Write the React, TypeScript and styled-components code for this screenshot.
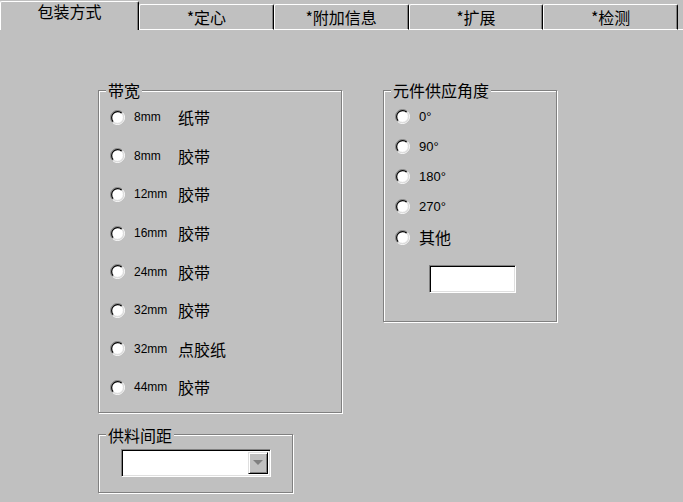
import React from "react";
import styled, { createGlobalStyle } from "styled-components";

const GlobalStyle = createGlobalStyle`
    html, body {
        margin: 0;
        padding: 0;
        background: #c0c0c0;
    }
    body {
        font-family: "Noto Sans CJK SC", "Liberation Sans", sans-serif;
        color: #000;
    }
`;

const CJK = `"Noto Sans CJK SC", "Noto Sans CJK JP", sans-serif`;
const LATIN = `"Liberation Sans", Arial, sans-serif`;

const StyledWindow = styled.div`
    width: 683px;
    height: 502px;
    overflow: hidden;
    background: #c0c0c0;
`;

const StyledTabStrip = styled.div`
    display: flex;
    flex-direction: row;
    align-items: flex-end;
    height: 30px;
`;

const StyledTab = styled.div<{ $active?: boolean }>`
    box-sizing: border-box;
    display: flex;
    align-items: center;
    justify-content: center;
    width: ${(p) => (p.$active ? "139px" : "134.75px")};
    height: ${(p) => (p.$active ? "29px" : "26px")};
    padding-bottom: ${(p) => (p.$active ? "10px" : "0")};
    border-top: 1px solid #fff;
    border-left: 1px solid #fff;
    border-right: 1px solid #000;
    border-bottom: ${(p) => (p.$active ? "none" : "1px solid #fff")};
    box-shadow: inset -1px 0 0 #808080;
    border-top-left-radius: 2px;
    border-top-right-radius: 2px;
    font-family: ${CJK};
    font-size: 16px;
    line-height: 18px;
    user-select: none;
`;

const StyledTabFiller = styled.div`
    flex: 1;
    height: 1px;
    background: #fff;
`;

const StyledPanel = styled.div`
    display: flex;
    flex-direction: row;
    align-items: flex-start;
    gap: 41px;
    padding: 52px 0 0 98px;
`;

const StyledColumn = styled.div`
    display: flex;
    flex-direction: column;
    gap: 14px;
`;

const StyledGroup = styled.fieldset<{ $width: number }>`
    box-sizing: border-box;
    width: ${(p) => p.$width}px;
    margin: 0;
    padding: 0;
    min-width: 0;
    border: 1px solid #808080;
    box-shadow: 1px 1px 0 #fff, inset 1px 1px 0 #fff;
`;

const StyledLegend = styled.legend`
    margin-left: 7px;
    padding: 0 2px;
    background: #c0c0c0;
    font-family: ${CJK};
    font-size: 16px;
    line-height: 16px;
`;

const StyledRadioList = styled.div<{ $top: number; $bottom: number }>`
    display: flex;
    flex-direction: column;
    padding: ${(p) => p.$top}px 0 ${(p) => p.$bottom}px 11px;
`;

const StyledRadioRow = styled.label<{ $h: number }>`
    display: flex;
    flex-direction: row;
    align-items: center;
    gap: 9px;
    height: ${(p) => p.$h}px;
    cursor: default;
`;

const StyledRadioSvg = styled.svg`
    flex-shrink: 0;
    display: block;
`;

const StyledRadioText = styled.div`
    display: flex;
    flex-direction: row;
    align-items: center;
`;

const StyledSize = styled.span`
    width: 44px;
    font-family: ${LATIN};
    font-size: 12px;
`;

const StyledAngle = styled.span`
    font-family: ${LATIN};
    font-size: 13px;
`;

const StyledCjk = styled.span`
    font-family: ${CJK};
    font-size: 16px;
    line-height: 18px;
`;

const StyledField = styled.div<{ $width: number }>`
    box-sizing: border-box;
    width: ${(p) => p.$width}px;
    height: 28px;
    background: #fff;
    border-top: 1px solid #808080;
    border-left: 1px solid #808080;
    border-right: 1px solid #fff;
    border-bottom: 1px solid #fff;
    box-shadow: inset 1px 1px 0 #000, inset -1px -1px 0 #dfdfdf;
`;

const StyledInputWrap = styled.div`
    padding: 13px 0 28px 45px;
`;

const StyledComboWrap = styled.div`
    padding: 6px 0 15px 22px;
`;

const StyledCombo = styled(StyledField)`
    display: flex;
    flex-direction: row;
    justify-content: flex-end;
    padding: 2px;
`;

const StyledDropButton = styled.div`
    box-sizing: border-box;
    display: flex;
    align-items: center;
    justify-content: center;
    width: 20px;
    height: 100%;
    background: #c0c0c0;
    border-top: 1px solid #dfdfdf;
    border-left: 1px solid #dfdfdf;
    border-right: 1px solid #000;
    border-bottom: 1px solid #000;
    box-shadow: inset 1px 1px 0 #fff, inset -1px -1px 0 #808080;
`;

const RadioIcon = () => (
    <StyledRadioSvg width="15" height="15" viewBox="0 0 15 15">
        <circle cx="7.5" cy="7.5" r="6" fill="#fff" />
        <path d="M2.55 12.45 A7 7 0 0 1 12.45 2.55" stroke="#808080" strokeWidth="1" fill="none" />
        <path d="M12.45 2.55 A7 7 0 0 1 2.55 12.45" stroke="#fff" strokeWidth="1" fill="none" />
        <path d="M3.26 11.74 A6 6 0 0 1 11.74 3.26" stroke="#000" strokeWidth="1.2" fill="none" />
        <path d="M11.74 3.26 A6 6 0 0 1 3.26 11.74" stroke="#dfdfdf" strokeWidth="1" fill="none" />
    </StyledRadioSvg>
);

const DropArrow = () => (
    <svg width="10" height="5" viewBox="0 0 10 5">
        <path d="M0 0 H10 L5 5 Z" fill="#808080" />
    </svg>
);

const tapes = [
    ["8mm", "纸带"],
    ["8mm", "胶带"],
    ["12mm", "胶带"],
    ["16mm", "胶带"],
    ["24mm", "胶带"],
    ["32mm", "胶带"],
    ["32mm", "点胶纸"],
    ["44mm", "胶带"],
];

const angles = ["0°", "90°", "180°", "270°"];

const tabs = ["包装方式", "*定心", "*附加信息", "*扩展", "*检测"];

const App = () => {
    return (
        <StyledWindow>
            <GlobalStyle />
            <StyledTabStrip>
                {tabs.map((t, i) => (
                    <StyledTab key={t} $active={i === 0}>{t}</StyledTab>
                ))}
                <StyledTabFiller />
            </StyledTabStrip>
            <StyledPanel>
                <StyledColumn>
                    <StyledGroup $width={244}>
                        <StyledLegend>带宽</StyledLegend>
                        <StyledRadioList $top={0} $bottom={5}>
                            {tapes.map(([size, kind], i) => (
                                <StyledRadioRow key={i} $h={38.6}>
                                    <RadioIcon />
                                    <StyledRadioText>
                                        <StyledSize>{size}</StyledSize>
                                        <StyledCjk>{kind}</StyledCjk>
                                    </StyledRadioText>
                                </StyledRadioRow>
                            ))}
                        </StyledRadioList>
                    </StyledGroup>
                    <StyledGroup $width={195}>
                        <StyledLegend>供料间距</StyledLegend>
                        <StyledComboWrap>
                            <StyledCombo $width={150}>
                                <StyledDropButton>
                                    <DropArrow />
                                </StyledDropButton>
                            </StyledCombo>
                        </StyledComboWrap>
                    </StyledGroup>
                </StyledColumn>
                <StyledGroup $width={174}>
                    <StyledLegend>元件供应角度</StyledLegend>
                    <StyledRadioList $top={3} $bottom={0}>
                        {angles.map((a) => (
                            <StyledRadioRow key={a} $h={30.25}>
                                <RadioIcon />
                                <StyledAngle>{a}</StyledAngle>
                            </StyledRadioRow>
                        ))}
                        <StyledRadioRow $h={30.25}>
                            <RadioIcon />
                            <StyledCjk>其他</StyledCjk>
                        </StyledRadioRow>
                    </StyledRadioList>
                    <StyledInputWrap>
                        <StyledField $width={87} />
                    </StyledInputWrap>
                </StyledGroup>
            </StyledPanel>
        </StyledWindow>
    );
};

export default App;
